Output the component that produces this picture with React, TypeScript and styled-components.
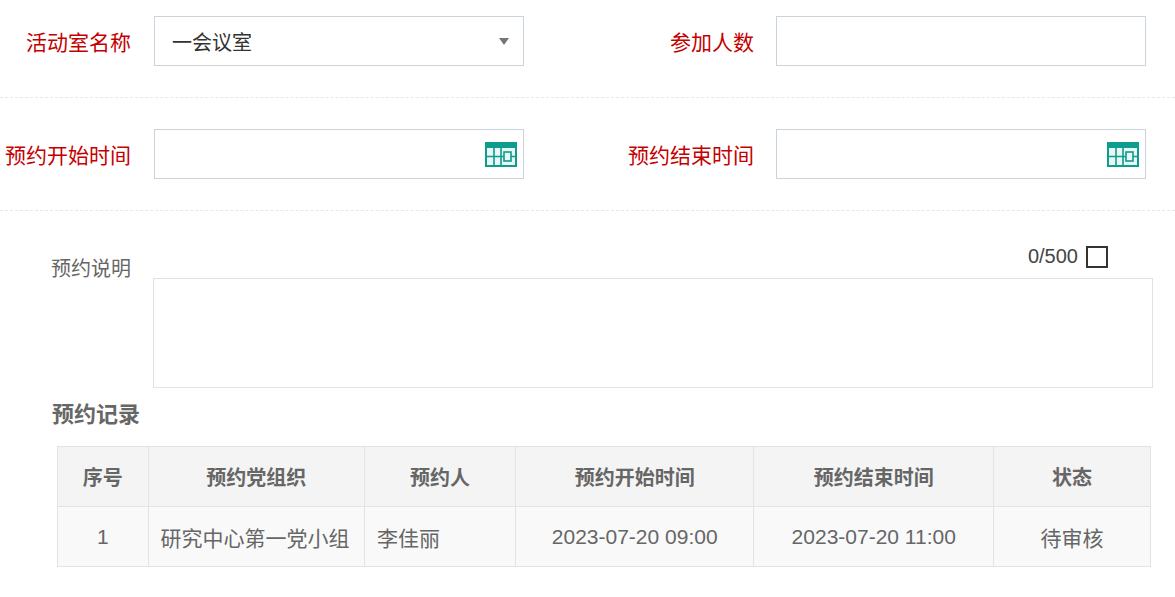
import React from 'react';
import styled, { createGlobalStyle } from 'styled-components';

const Global = createGlobalStyle`
  body { margin: 0; background: #fff; font-family: "Liberation Sans", "Noto Sans CJK SC", sans-serif; }
`;

const Page = styled.div`
  width: 1175px;
`;

const FormRow = styled.div<{ $top: number }>`
  display: flex;
  align-items: center;
  padding: ${({ $top }) => $top}px 0 31px;
  border-bottom: 1px dashed #e4e8ec;
`;

const Label = styled.div<{ $w: number; $gap: number; $red?: boolean }>`
  width: ${({ $w }) => $w}px;
  margin-right: ${({ $gap }) => $gap}px;
  text-align: right;
  font-size: 21px;
  color: ${({ $red }) => ($red ? '#c40000' : '#666')};
  white-space: nowrap;
`;

const Field = styled.div`
  position: relative;
  width: 370px;
  height: 50px;
  box-sizing: border-box;
  border: 1px solid #c9d4dd;
  display: flex;
  align-items: center;
  padding: 0 17px;
  font-size: 20px;
  color: #333;
`;

const Caret = styled.span`
  position: absolute;
  right: 14px;
  top: 21px;
  border-left: 5px solid transparent;
  border-right: 5px solid transparent;
  border-top: 7px solid #777;
`;

const CalIcon = styled.svg`
  position: absolute;
  right: 6px;
  top: 12px;
`;

const Calendar = () => (
  <CalIcon width="32" height="25" viewBox="0 0 32 25">
    <rect x="0" y="0" width="32" height="25" fill="#0e9c8c" />
    <rect x="2" y="6" width="28" height="17" fill="#e9f7f5" />
    <g stroke="#0e9c8c" strokeWidth="1.6" fill="none">
      <path d="M2 14.5H30M9 6V23M16 6V23" />
      <rect x="19" y="10" width="7" height="9" fill="#e9f7f5" />
    </g>
  </CalIcon>
);

const NoteBlock = styled.div`
  display: grid;
  grid-template-columns: 131px 1000px;
  column-gap: 22px;
  padding-top: 34px;
`;

const NoteLabel = styled.div`
  grid-row: 1 / 3;
  padding-top: 8px;
  text-align: right;
  font-size: 20px;
  color: #666;
`;

const Counter = styled.div`
  display: flex;
  justify-content: flex-end;
  align-items: center;
  gap: 8px;
  padding-right: 45px;
  height: 23px;
  margin-bottom: 10px;
  font-size: 20px;
  color: #444;
`;

const Box = styled.span`
  width: 18px;
  height: 18px;
  border: 2px solid #333;
`;

const TextArea = styled.div`
  height: 110px;
  box-sizing: border-box;
  border: 1px solid #dde3e8;
`;

const Heading = styled.h2`
  margin: 8px 0 18px 52px;
  font-size: 22px;
  font-weight: bold;
  color: #666;
`;

const Table = styled.table`
  margin-left: 57px;
  width: 1094px;
  border-collapse: collapse;
  font-size: 21px;
  color: #666;
`;

const Th = styled.th<{ $w: number }>`
  width: ${({ $w }) => $w}px;
  height: 59px;
  padding: 0;
  background: #f4f4f4;
  border: 1px solid #e3e3e3;
  font-size: 20px;
  font-weight: bold;
  color: #666;
`;

const Td = styled.td<{ $left?: boolean }>`
  height: 59px;
  background: #f9f9f9;
  border: 1px solid #e3e3e3;
  text-align: ${({ $left }) => ($left ? 'left' : 'center')};
  padding: 0 12px;
`;

const cols = [
  ['序号', 90],
  ['预约党组织', 217],
  ['预约人', 151],
  ['预约开始时间', 239],
  ['预约结束时间', 240],
  ['状态', 157],
] as const;

export default function App() {
  return (
    <Page>
      <Global />
      <FormRow $top={16}>
        <Label $w={131} $gap={23} $red>活动室名称</Label>
        <Field>一会议室<Caret /></Field>
        <Label $w={230} $gap={22} $red>参加人数</Label>
        <Field />
      </FormRow>
      <FormRow $top={31}>
        <Label $w={131} $gap={23} $red>预约开始时间</Label>
        <Field><Calendar /></Field>
        <Label $w={230} $gap={22} $red>预约结束时间</Label>
        <Field><Calendar /></Field>
      </FormRow>
      <NoteBlock>
        <NoteLabel>预约说明</NoteLabel>
        <Counter>0/500 <Box /></Counter>
        <TextArea />
      </NoteBlock>
      <Heading>预约记录</Heading>
      <Table>
        <thead>
          <tr>{cols.map(([t, w]) => <Th key={t} $w={w}>{t}</Th>)}</tr>
        </thead>
        <tbody>
          <tr>
            <Td>1</Td>
            <Td $left>研究中心第一党小组</Td>
            <Td $left>李佳丽</Td>
            <Td>2023-07-20 09:00</Td>
            <Td>2023-07-20 11:00</Td>
            <Td>待审核</Td>
          </tr>
        </tbody>
      </Table>
    </Page>
  );
}
